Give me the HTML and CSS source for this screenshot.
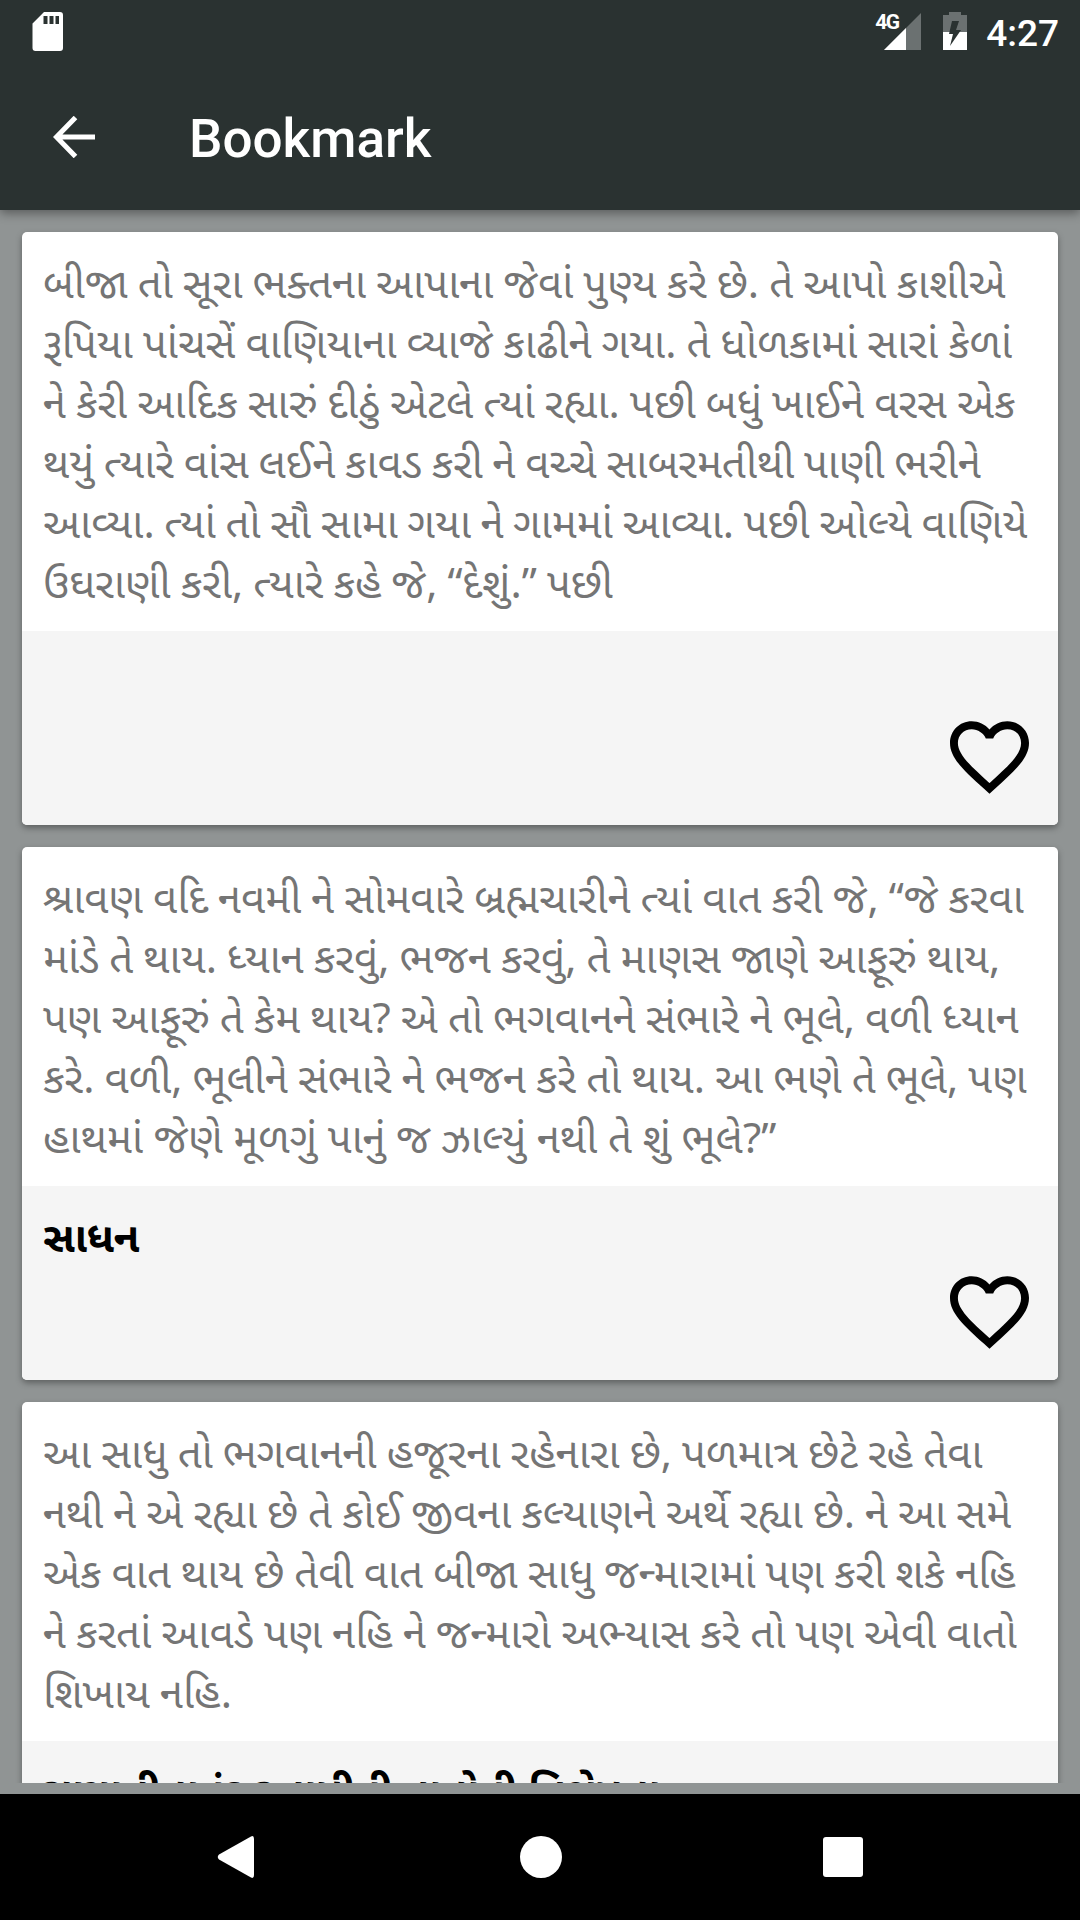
FILE: index.html
```
<!DOCTYPE html>
<html lang="gu">

<head>
    <meta charset="UTF-8">
    <meta name="viewport" content="width=device-width, initial-scale=1.0">
    <title>Bookmark</title>
    <link rel="stylesheet" href="styles.css">
</head>

<body>
    <div class="screen">
        <header class="header">
            <div class="statusbar">
                <svg class="sdcard" viewBox="0 0 32 40">
                    <path fill="#fff" fill-rule="evenodd" d="M12 0H28a3 3 0 0 1 3 3V36a3 3 0 0 1-3 3H3.500a3 3 0 0 1-3-3V11.500zM11.500 4V12H15.500V4zM17.500 4V12H21.500V4zM23.500 4V12H27V4z" />
                </svg>
                <div class="status-right">
                    <span class="network">4G</span>
                    <svg class="signal" viewBox="0 0 37 37">
                        <path fill="#6b7171" d="M37 0V37H0z" />
                        <path fill="#fff" d="M22 15V37H0z" />
                    </svg>
                    <svg class="battery" viewBox="0 0 24 38">
                        <path fill="#6b7171" d="M6 0H18V3H24V21H0V3H6z" />
                        <path fill="#fff" d="M0 20H24V38H0z" />
                        <path fill="#2a3231" d="M9 9H16L13 18H18L7 34L10 22H6z" />
                    </svg>
                    <span class="clock">4:27</span>
                </div>
            </div>
            <div class="toolbar">
                <svg class="back" viewBox="0 0 42 42">
                    <path fill="none" stroke="#fff" stroke-width="5" d="M42 21H4M22.500 1.500L3.500 21L22.500 40.500" />
                </svg>
                <h1 class="title">Bookmark</h1>
            </div>
        </header>

        <main class="list">
            <div class="card">
                <p class="quote">બીજા તો સૂરા ભક્તના આપાના જેવાં પુણ્ય કરે છે. તે આપો કાશીએ<br>
                    રૂપિયા પાંચસેં વાણિયાના વ્યાજે કાઢીને ગયા. તે ધોળકામાં સારાં કેળાં<br>
                    ને કેરી આદિક સારું દીઠું એટલે ત્યાં રહ્યા. પછી બધું ખાઈને વરસ એક<br>
                    <span class="tight">થયું ત્યારે વાંસ લઈને કાવડ કરી ને વચ્ચે સાબરમતીથી પાણી ભરીને</span><br>
                    <span class="tight">આવ્યા. ત્યાં તો સૌ સામા ગયા ને ગામમાં આવ્યા. પછી ઓલ્યે વાણિયે</span><br>
                    ઉઘરાણી કરી, ત્યારે કહે જે, “દેશું.” પછી</p>
                <div class="card-footer">
                    <h2 class="topic"></h2>
                    <svg class="heart" viewBox="2 3 20 18.350">
                        <path d="M16.500 3c-1.740 0-3.410.810-4.500 2.090C10.910 3.810 9.240 3 7.500 3 4.420 3 2 5.420 2 8.500c0 3.780 3.400 6.860 8.550 11.540L12 21.350l1.450-1.320C18.600 15.360 22 12.280 22 8.500 22 5.420 19.580 3 16.500 3zm-4.400 15.550l-.1.100-.1-.1C7.140 14.240 4 11.390 4 8.500 4 6.500 5.500 5 7.500 5c1.540 0 3.040.990 3.570 2.360h1.870C13.460 5.990 14.960 5 16.500 5c2 0 3.500 1.500 3.500 3.500 0 2.890-3.140 5.740-7.900 10.050z" />
                    </svg>
                </div>
            </div>

            <div class="card">
                <p class="quote">શ્રાવણ વદિ નવમી ને સોમવારે બ્રહ્મચારીને ત્યાં વાત કરી જે, “જે કરવા<br>
                    માંડે તે થાય. ધ્યાન કરવું, ભજન કરવું, તે માણસ જાણે આફૂરું થાય,<br>
                    પણ આફૂરું તે કેમ થાય? એ તો ભગવાનને સંભારે ને ભૂલે, વળી ધ્યાન<br>
                    કરે. વળી, ભૂલીને સંભારે ને ભજન કરે તો થાય. આ ભણે તે ભૂલે, પણ<br>
                    <span class="loose">હાથમાં જેણે મૂળગું પાનું જ ઝાલ્યું નથી તે શું ભૂલે?”</span></p>
                <div class="card-footer">
                    <h2 class="topic">સાધન</h2>
                    <svg class="heart" viewBox="2 3 20 18.350">
                        <path d="M16.500 3c-1.740 0-3.410.810-4.500 2.090C10.910 3.810 9.240 3 7.500 3 4.420 3 2 5.420 2 8.500c0 3.780 3.400 6.860 8.550 11.540L12 21.350l1.450-1.320C18.600 15.360 22 12.280 22 8.500 22 5.420 19.580 3 16.500 3zm-4.400 15.550l-.1.100-.1-.1C7.140 14.240 4 11.390 4 8.500 4 6.500 5.500 5 7.500 5c1.540 0 3.040.990 3.570 2.360h1.870C13.460 5.990 14.960 5 16.500 5c2 0 3.500 1.500 3.500 3.500 0 2.890-3.140 5.740-7.900 10.050z" />
                    </svg>
                </div>
            </div>

            <div class="card">
                <p class="quote">આ સાધુ તો ભગવાનની હજૂરના રહેનારા છે, પળમાત્ર છેટે રહે તેવા<br>
                    નથી ને એ રહ્યા છે તે કોઈ જીવના કલ્યાણને અર્થે રહ્યા છે. ને આ સમે<br>
                    એક વાત થાય છે તેવી વાત બીજા સાધુ જન્મારામાં પણ કરી શકે નહિ<br>
                    ને કરતાં આવડે પણ નહિ ને જન્મારો અભ્યાસ કરે તો પણ એવી વાતો<br>
                    શિખાય નહિ.</p>
                <div class="card-footer">
                    <h2 class="topic">ગુણાતીતાનંદ સ્વામીની વાતોની વિશેષતા</h2>
                </div>
            </div>
        </main>

        <nav class="navbar">
            <svg class="nav-icon" viewBox="0 0 42 42">
                <path fill="#fff" d="M2 18.500L34 .500Q37 -1 37 3V39Q37 43 34 41.500L2 23.500Q-.5 21 2 18.500z" />
            </svg>
            <svg class="nav-icon" viewBox="0 0 42 42">
                <circle fill="#fff" cx="21" cy="21" r="21" />
            </svg>
            <svg class="nav-icon" viewBox="0 0 42 42">
                <rect fill="#fff" x="1" y="1" width="40" height="40" rx="3" />
            </svg>
        </nav>
    </div>
</body>

</html>
```
FILE: styles.css
```
body {
    margin: 0px;
    padding: 0px;
    font-family: Roboto, sans-serif;
}

.screen {
    display: flex;
    flex-direction: column;
    width: 1080px;
    height: 1920px;
    overflow: hidden;
    background-color: #909494;
}

.header {
    position: relative;
    z-index: 1;
    height: 210px;
    flex-shrink: 0;
    color: white;
    background-color: #2a3231;
    box-shadow: 0 3px 10px rgba(0, 0, 0, 0.4);
}

.statusbar {
    display: flex;
    justify-content: space-between;
    align-items: flex-start;
    height: 63px;
    padding: 0 21px 0 32px;
    box-sizing: border-box;
}

.sdcard {
    width: 32px;
    height: 40px;
    margin-top: 12px;
}

.status-right {
    display: flex;
    align-items: flex-start;
}

.network {
    width: 23px;
    margin: 12px -14px 0 0;
    font-size: 21px;
    line-height: 20px;
    font-weight: bold;
    letter-spacing: -1.5px;
}

.signal {
    width: 37px;
    height: 37px;
    margin-top: 13px;
}

.battery {
    width: 24px;
    height: 38px;
    margin: 12px 19px 0 22px;
}

.clock {
    font-size: 37px;
    line-height: 67px;
    font-weight: 500;
}

.toolbar {
    display: flex;
    align-items: center;
    height: 147px;
    padding-left: 53px;
}

.back {
    width: 42px;
    height: 42px;
}

.title {
    margin: 5px 0 0 94px;
    font-size: 53px;
    line-height: 62px;
    font-weight: 500;
}

.list {
    display: flex;
    flex-direction: column;
    gap: 22px;
    height: 1573px;
    flex-shrink: 0;
    padding: 22px 22px 0;
    margin-bottom: 11px;
    box-sizing: border-box;
    overflow: hidden;
}

.card {
    flex-shrink: 0;
    border-radius: 5px;
    background-color: white;
    box-shadow: 0 3px 6px rgba(0, 0, 0, 0.35);
    overflow: hidden;
}

.quote,
.topic {
    font-family: "Noto Sans Gujarati", "Noto Sans", sans-serif;
    font-size: 42px;
    line-height: 60px;
}

.quote {
    margin: 0;
    padding: 26px 0 13px 21px;
    color: #757575;
    white-space: nowrap;
    word-spacing: -0.9px;
}

.tight {
    word-spacing: -1.3px;
}

.loose {
    word-spacing: -0.3px;
}

.card-footer {
    display: flex;
    flex-direction: column;
    height: 194px;
    padding: 26px 29px 31px 21px;
    box-sizing: border-box;
    background-color: #f5f5f5;
}

.topic {
    margin: 0;
    font-weight: bold;
    color: black;
    letter-spacing: -0.2px;
}

.heart {
    width: 79px;
    height: 73px;
    flex-shrink: 0;
    margin: auto 0 0 auto;
}

.navbar {
    display: flex;
    justify-content: space-between;
    align-items: center;
    height: 126px;
    padding: 0 216px 0 217px;
    flex-shrink: 0;
    background-color: black;
}

.nav-icon {
    width: 42px;
    height: 42px;
}
```
